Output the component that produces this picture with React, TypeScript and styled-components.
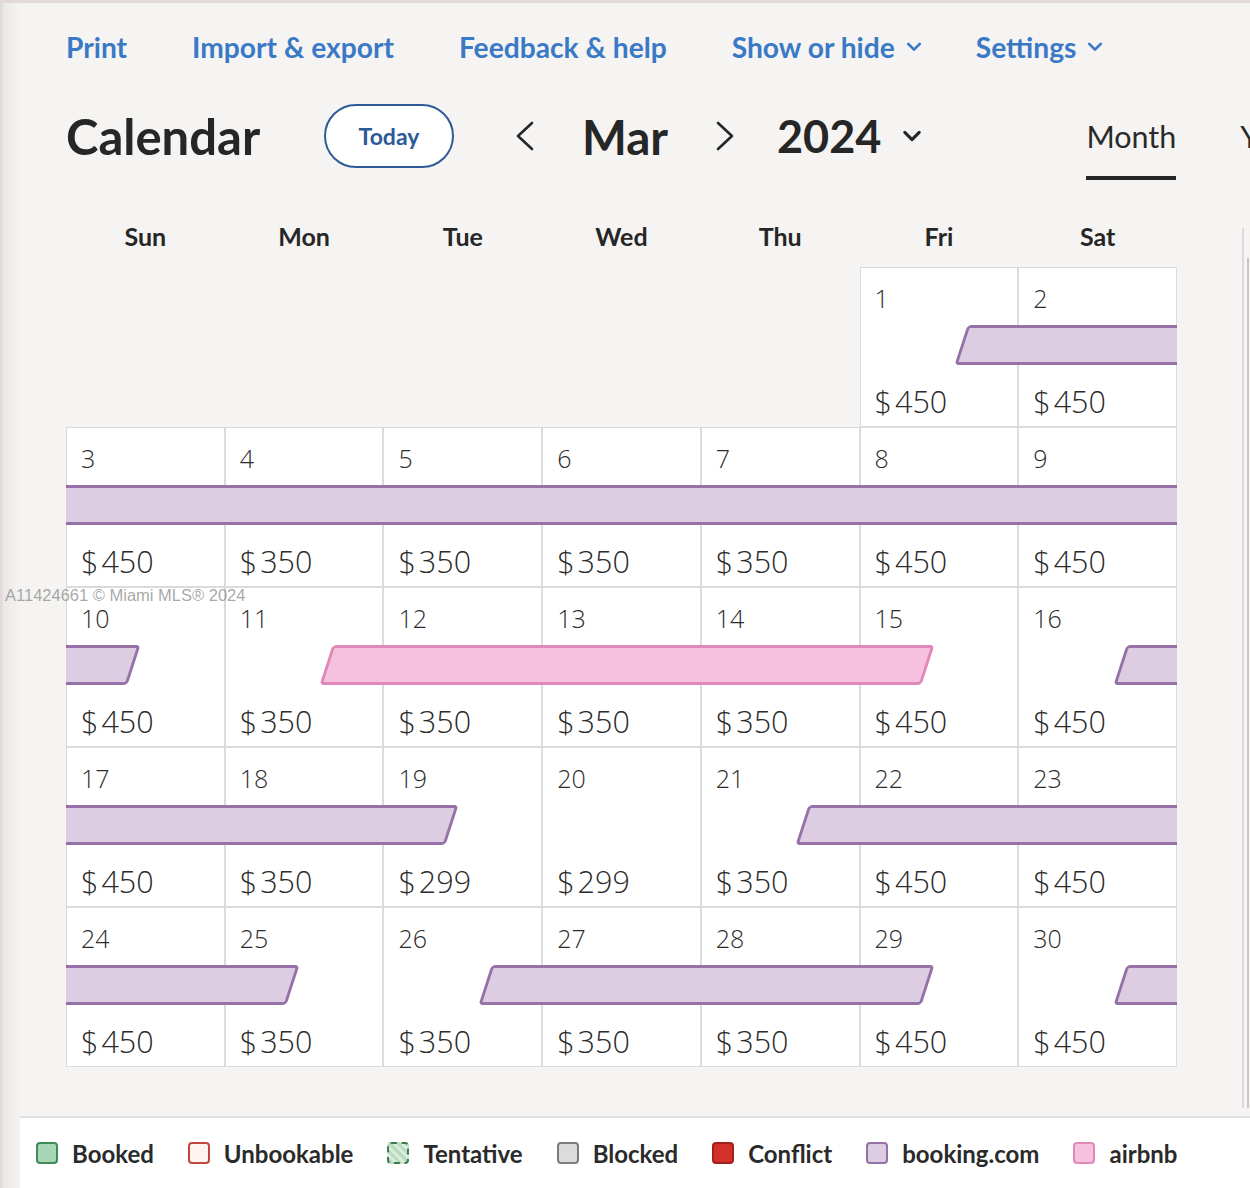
import React from 'react';
import styled, { createGlobalStyle } from 'styled-components';

const GlobalStyle = createGlobalStyle`
  html, body {
    margin: 0;
    padding: 0;
    background: #f5f4f2;
  }
  body {
    font-family: "Open Sans", "Noto Sans", sans-serif;
    color: #262626;
  }
`;

const Page = styled.div`
  position: relative;
  width: 1250px;
  height: 1188px;
  overflow: hidden;
  background: #f5f4f2;
  border-top: 3px solid #e2dada;
  box-sizing: border-box;
  display: flex;
  flex-direction: column;

  &::before {
    content: '';
    position: absolute;
    left: 0;
    top: 0;
    bottom: 0;
    width: 20px;
    background: linear-gradient(to right, #dcd8d8 0, #ebe8e7 4px, #f5f4f2 20px);
    pointer-events: none;
  }
`;

const Main = styled.div`
  flex: 1;
  padding-left: 66px;
  position: relative;
`;

const Nav = styled.nav`
  display: flex;
  align-items: center;
  gap: 65px;
  padding-top: 24px;
  height: 40px;
`;

const NavLink = styled.a<{ $menu?: boolean }>`
  display: flex;
  align-items: center;
  gap: 11px;
  margin-right: ${(p) => (p.$menu ? '-11px' : '0')};
  font-family: "Lato", "Open Sans", sans-serif;
  font-size: 28.2px;
  font-weight: 700;
  color: #3a79c6;
  text-decoration: none;
  white-space: nowrap;
`;

const TitleRow = styled.div`
  display: flex;
  align-items: center;
  margin-top: 36px;
  height: 66px;
  white-space: nowrap;

  & > * {
    flex-shrink: 0;
  }
`;

const Title = styled.h1`
  margin: 0;
  font-family: "Lato", "Open Sans", sans-serif;
  font-size: 49px;
  font-weight: 700;
  color: #262626;
  width: 258px;
`;

const TodayButton = styled.button`
  height: 64px;
  width: 130px;
  border: 2px solid #2e5a98;
  border-radius: 32px;
  background: #fff;
  font-family: "Lato", "Open Sans", sans-serif;
  font-size: 23px;
  font-weight: 700;
  color: #2d5a97;
  margin-right: 60px;
  cursor: pointer;
`;

const ArrowButton = styled.button`
  border: none;
  background: none;
  padding: 0;
  display: flex;
  align-items: center;
  cursor: pointer;
`;

const BigLabel = styled.span<{ $width: number }>`
  display: inline-block;
  width: ${(p) => p.$width}px;
  text-align: center;
  font-family: "Lato", "Open Sans", sans-serif;
  font-size: 47.5px;
  font-weight: 700;
  color: #262626;
`;

const YearSelect = styled.div`
  display: flex;
  align-items: center;
  gap: 21px;
  margin-left: 41px;
  font-family: "Lato", "Open Sans", sans-serif;
  font-size: 45px;
  font-weight: 700;
  color: #262626;
`;

const Tabs = styled.div`
  display: flex;
  gap: 64px;
  margin-left: 164px;
  align-self: flex-start;
`;

const Tab = styled.div<{ $active?: boolean }>`
  font-family: "Lato", "Open Sans", sans-serif;
  font-size: 30.5px;
  font-weight: 400;
  color: #2a2a2a;
  padding-top: 15px;
  height: 77px;
  box-sizing: border-box;
  border-bottom: 4px solid ${(p) => (p.$active ? '#262626' : 'transparent')};
`;

const Body = styled.div`
  display: flex;
  margin-top: 47px;
`;

const CalendarColumn = styled.div`
  width: 1111px;
  flex-shrink: 0;
`;

const SidePanel = styled.div`
  margin-left: 65px;
  margin-top: 12px;
  height: 880px;
  flex: 1;
  border-left: 2px solid #dcdada;
  position: relative;

  &::after {
    content: '';
    position: absolute;
    left: 3px;
    top: 30px;
    bottom: 0;
    width: 2px;
    background: #c9c7c7;
  }
`;

const WeekHeader = styled.div`
  display: grid;
  grid-template-columns: repeat(7, 1fr);
  height: 40px;
  align-items: center;
`;

const WeekdayLabel = styled.div`
  text-align: center;
  font-family: "Lato", "Open Sans", sans-serif;
  font-size: 25px;
  font-weight: 700;
  color: #262626;
`;

const MonthGrid = styled.div`
  margin-top: 11px;
  display: flex;
  flex-direction: column;
`;

const WeekRow = styled.div`
  position: relative;
  display: grid;
  grid-template-columns: repeat(7, 1fr);
  height: 160px;
  overflow: hidden;
`;

const DayCell = styled.div<{ $empty?: boolean }>`
  box-sizing: border-box;
  border: ${(p) => (p.$empty ? 'none' : '1px solid #dcdbdb')};
  background: ${(p) => (p.$empty ? 'transparent' : '#fff')};
  display: flex;
  flex-direction: column;
  justify-content: space-between;
  padding: 13px 14px 5px;
  font-family: "Open Sans", "Noto Sans", sans-serif;
  font-weight: 300;
  color: #2b2b2b;
`;

const DayNumber = styled.span`
  font-size: 25px;
  line-height: 34px;
`;

const Price = styled.span`
  font-size: 30.5px;
  line-height: 40px;

  & > small {
    font-size: inherit;
    margin-right: 3px;
  }
`;

const Bar = styled.div<{ $source: 'booking' | 'airbnb' }>`
  position: absolute;
  top: 58px;
  height: 40px;
  box-sizing: border-box;
  border: 3px solid ${(p) => (p.$source === 'airbnb' ? '#e089b9' : '#9571a7')};
  background: ${(p) => (p.$source === 'airbnb' ? '#f6c1df' : '#dccde3')};
  border-radius: 4px;
  transform: skewX(-18deg);
`;

const Watermark = styled.div`
  position: absolute;
  left: 5px;
  top: 583px;
  font-family: "Liberation Sans", Arial, sans-serif;
  font-size: 16.5px;
  color: rgba(130, 130, 130, 0.7);
  white-space: nowrap;
  pointer-events: none;
`;

const Legend = styled.footer`
  height: 70px;
  background: #fff;
  border-top: 2px solid #e3e1e0;
  display: flex;
  align-items: center;
  gap: 34px;
  padding-left: 36px;
`;

const LegendItem = styled.div`
  display: flex;
  align-items: center;
  gap: 14px;
  font-family: "Lato", "Open Sans", sans-serif;
  font-size: 24px;
  font-weight: 700;
  color: #2a2a2a;
  white-space: nowrap;
`;

const Swatch = styled.span<{ $fill: string; $border: string; $dashed?: boolean }>`
  width: 22px;
  height: 22px;
  box-sizing: border-box;
  border-radius: 4px;
  border: 2px ${(p) => (p.$dashed ? 'dashed' : 'solid')} ${(p) => p.$border};
  background: ${(p) => p.$fill};
`;

const Chevron = ({ dir, size = 30, color = '#262626' }: { dir: 'left' | 'right'; size?: number; color?: string }) => (
  <svg width={size * 0.7} height={size} viewBox="0 0 21 30" fill="none">
    <polyline
      points={dir === 'left' ? '18,2 4,15 18,28' : '3,2 17,15 3,28'}
      stroke={color}
      strokeWidth="2.6"
      strokeLinecap="round"
      strokeLinejoin="round"
    />
  </svg>
);

const ChevronDown = ({ w = 16, color = '#3a79c6', stroke = 2.8 }: { w?: number; color?: string; stroke?: number }) => (
  <svg width={w} height={w * 0.6} viewBox="0 0 16 10" fill="none">
    <polyline points="2,2 8,8 14,2" stroke={color} strokeWidth={stroke} strokeLinecap="round" strokeLinejoin="round" />
  </svg>
);

type BarData = { from: number; to: number; source: 'booking' | 'airbnb' };
type Week = { days: ({ n: number; price: number } | null)[]; bars: BarData[] };

// check-in starts past the middle of a day, check-out ends before it
const IN = 0.64;
const OUT = 0.43;

const weeks: Week[] = [
  {
    days: [null, null, null, null, null, { n: 1, price: 450 }, { n: 2, price: 450 }],
    bars: [{ from: 5 + IN, to: 7.6, source: 'booking' }],
  },
  {
    days: [450, 350, 350, 350, 350, 450, 450].map((price, i) => ({ n: 3 + i, price })),
    bars: [{ from: -0.6, to: 7.6, source: 'booking' }],
  },
  {
    days: [450, 350, 350, 350, 350, 450, 450].map((price, i) => ({ n: 10 + i, price })),
    bars: [
      { from: -0.6, to: 0 + OUT, source: 'booking' },
      { from: 1 + IN, to: 5 + OUT, source: 'airbnb' },
      { from: 6 + IN, to: 7.6, source: 'booking' },
    ],
  },
  {
    days: [450, 350, 299, 299, 350, 450, 450].map((price, i) => ({ n: 17 + i, price })),
    bars: [
      { from: -0.6, to: 2 + OUT, source: 'booking' },
      { from: 4 + IN, to: 7.6, source: 'booking' },
    ],
  },
  {
    days: [450, 350, 350, 350, 350, 450, 450].map((price, i) => ({ n: 24 + i, price })),
    bars: [
      { from: -0.6, to: 1 + OUT, source: 'booking' },
      { from: 2 + IN, to: 5 + OUT, source: 'booking' },
      { from: 6 + IN, to: 7.6, source: 'booking' },
    ],
  },
];

const weekdays = ['Sun', 'Mon', 'Tue', 'Wed', 'Thu', 'Fri', 'Sat'];

const legend = [
  { label: 'Booked', fill: '#a9d6b6', border: '#3f8a5b' },
  { label: 'Unbookable', fill: '#fdf4f2', border: '#c2463f' },
  {
    label: 'Tentative',
    fill: 'repeating-linear-gradient(45deg, #b9dcc0 0 3px, #d9ecdc 3px 6px)',
    border: '#3f7a50',
    dashed: true,
  },
  { label: 'Blocked', fill: '#dcdcdc', border: '#7c7c7c' },
  { label: 'Conflict', fill: '#d3302a', border: '#a3201c' },
  { label: 'booking.com', fill: '#dccde3', border: '#9571a7' },
  { label: 'airbnb', fill: '#f6c1df', border: '#e089b9' },
];

const App = () => {
  return (
    <Page>
      <GlobalStyle />
      <Main>
        <Nav>
          <NavLink>Print</NavLink>
          <NavLink>Import &amp; export</NavLink>
          <NavLink>Feedback &amp; help</NavLink>
          <NavLink $menu>
            Show or hide <ChevronDown />
          </NavLink>
          <NavLink $menu>
            Settings <ChevronDown />
          </NavLink>
        </Nav>

        <TitleRow>
          <Title>Calendar</Title>
          <TodayButton>Today</TodayButton>
          <ArrowButton>
            <Chevron dir="left" />
          </ArrowButton>
          <BigLabel $width={180}>Mar</BigLabel>
          <ArrowButton>
            <Chevron dir="right" />
          </ArrowButton>
          <YearSelect>
            2024 <ChevronDown w={20} color="#262626" stroke={2.6} />
          </YearSelect>
          <Tabs>
            <Tab $active>Month</Tab>
            <Tab>Year</Tab>
          </Tabs>
        </TitleRow>

        <Body>
          <CalendarColumn>
            <WeekHeader>
              {weekdays.map((d) => (
                <WeekdayLabel key={d}>{d}</WeekdayLabel>
              ))}
            </WeekHeader>
            <MonthGrid>
              {weeks.map((week, wi) => (
                <WeekRow key={wi}>
                  {week.days.map((day, di) =>
                    day ? (
                      <DayCell key={di}>
                        <DayNumber>{day.n}</DayNumber>
                        <Price>
                          <small>$</small>
                          {day.price}
                        </Price>
                      </DayCell>
                    ) : (
                      <DayCell key={di} $empty />
                    )
                  )}
                  {week.bars.map((bar, bi) => (
                    <Bar
                      key={bi}
                      $source={bar.source}
                      style={{
                        left: `${(bar.from / 7) * 100}%`,
                        width: `${((bar.to - bar.from) / 7) * 100}%`,
                      }}
                    />
                  ))}
                </WeekRow>
              ))}
            </MonthGrid>
          </CalendarColumn>
          <SidePanel />
        </Body>
      </Main>

      <Legend>
        {legend.map((item) => (
          <LegendItem key={item.label}>
            <Swatch $fill={item.fill} $border={item.border} $dashed={item.dashed} />
            {item.label}
          </LegendItem>
        ))}
      </Legend>

      <Watermark>A11424661 © Miami MLS® 2024</Watermark>
    </Page>
  );
};

export default App;
